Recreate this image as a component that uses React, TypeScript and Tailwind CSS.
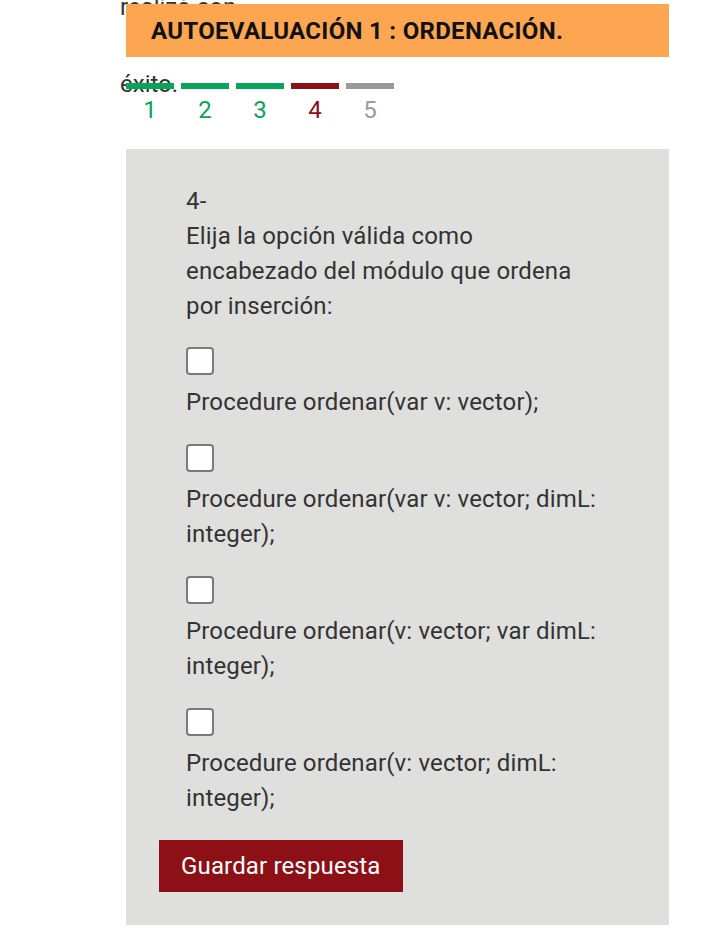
import React from 'react';

const steps = [
  { n: 1, bar: 'bg-[#0aa35a]', text: 'text-[#0aa35a]' },
  { n: 2, bar: 'bg-[#0aa35a]', text: 'text-[#0aa35a]' },
  { n: 3, bar: 'bg-[#0aa35a]', text: 'text-[#0aa35a]' },
  { n: 4, bar: 'bg-[#8c1016]', text: 'text-[#8c1016]' },
  { n: 5, bar: 'bg-[#9a9a9a]', text: 'text-[#9a9a9a]' },
];

const options = [
  ['Procedure ordenar(var v: vector);'],
  ['Procedure ordenar(var v: vector; dimL:', 'integer);'],
  ['Procedure ordenar(v: vector; var dimL:', 'integer);'],
  ['Procedure ordenar(v: vector; dimL:', 'integer);'],
];

export default function App() {
  return (
    <div
      className="relative w-[720px] min-h-[952px] bg-white overflow-hidden text-[#333333]"
      style={{ fontFamily: 'Roboto, "Noto Sans", sans-serif' }}
    >
      {/* leftover text from the previous block, covered by the header */}
      <div className="absolute left-[120px] top-[-31px] text-[24px] leading-[77px] text-[#333333] whitespace-nowrap">
        <div>realizó con</div>
        <div>éxito.</div>
      </div>

      <div className="relative ml-[126px] mt-[4px] w-[543px] h-[53px] bg-[#fca651] flex items-center pl-[25px]">
        <span className="text-[24px] font-bold text-[#111111] tracking-[0.3px] whitespace-nowrap">
          AUTOEVALUACIÓN 1 : ORDENACIÓN.
        </span>
      </div>

      <div className="relative ml-[126px] mt-[26px] flex gap-[7px]">
        {steps.map((s) => (
          <div key={s.n} className="w-[48px] flex flex-col items-center">
            <div className={`w-full h-[6px] ${s.bar}`} />
            <span className={`mt-[6px] text-[24px] leading-[30px] ${s.text}`}>{s.n}</span>
          </div>
        ))}
      </div>

      <div className="ml-[126px] mt-[24px] w-[543px] h-[776px] bg-[#dfdfde] pl-[60px] pr-[40px] pt-[35px] whitespace-nowrap tracking-[0.15px]">
        <div className="text-[24px] leading-[35px] text-[#333333]">
          <div>4-</div>
          <div>Elija la opción válida como</div>
          <div>encabezado del módulo que ordena</div>
          <div>por inserción:</div>
        </div>

        <div className="mt-[23px] flex flex-col gap-[24px]">
          {options.map((lines, i) => (
            <label key={i} className="flex flex-col">
              <span className="w-[28px] h-[28px] bg-white border-2 border-[#7a7a7a] rounded-[4px]" />
              <span className="mt-[10px] text-[24px] leading-[35px] text-[#333333]">
                {lines.map((l) => (
                  <div key={l}>{l}</div>
                ))}
              </span>
            </label>
          ))}
        </div>

        <button className="mt-[24px] -ml-[27px] h-[52px] px-[22px] bg-[#8c1016] text-white text-[24px]">
          Guardar respuesta
        </button>
      </div>
    </div>
  );
}
